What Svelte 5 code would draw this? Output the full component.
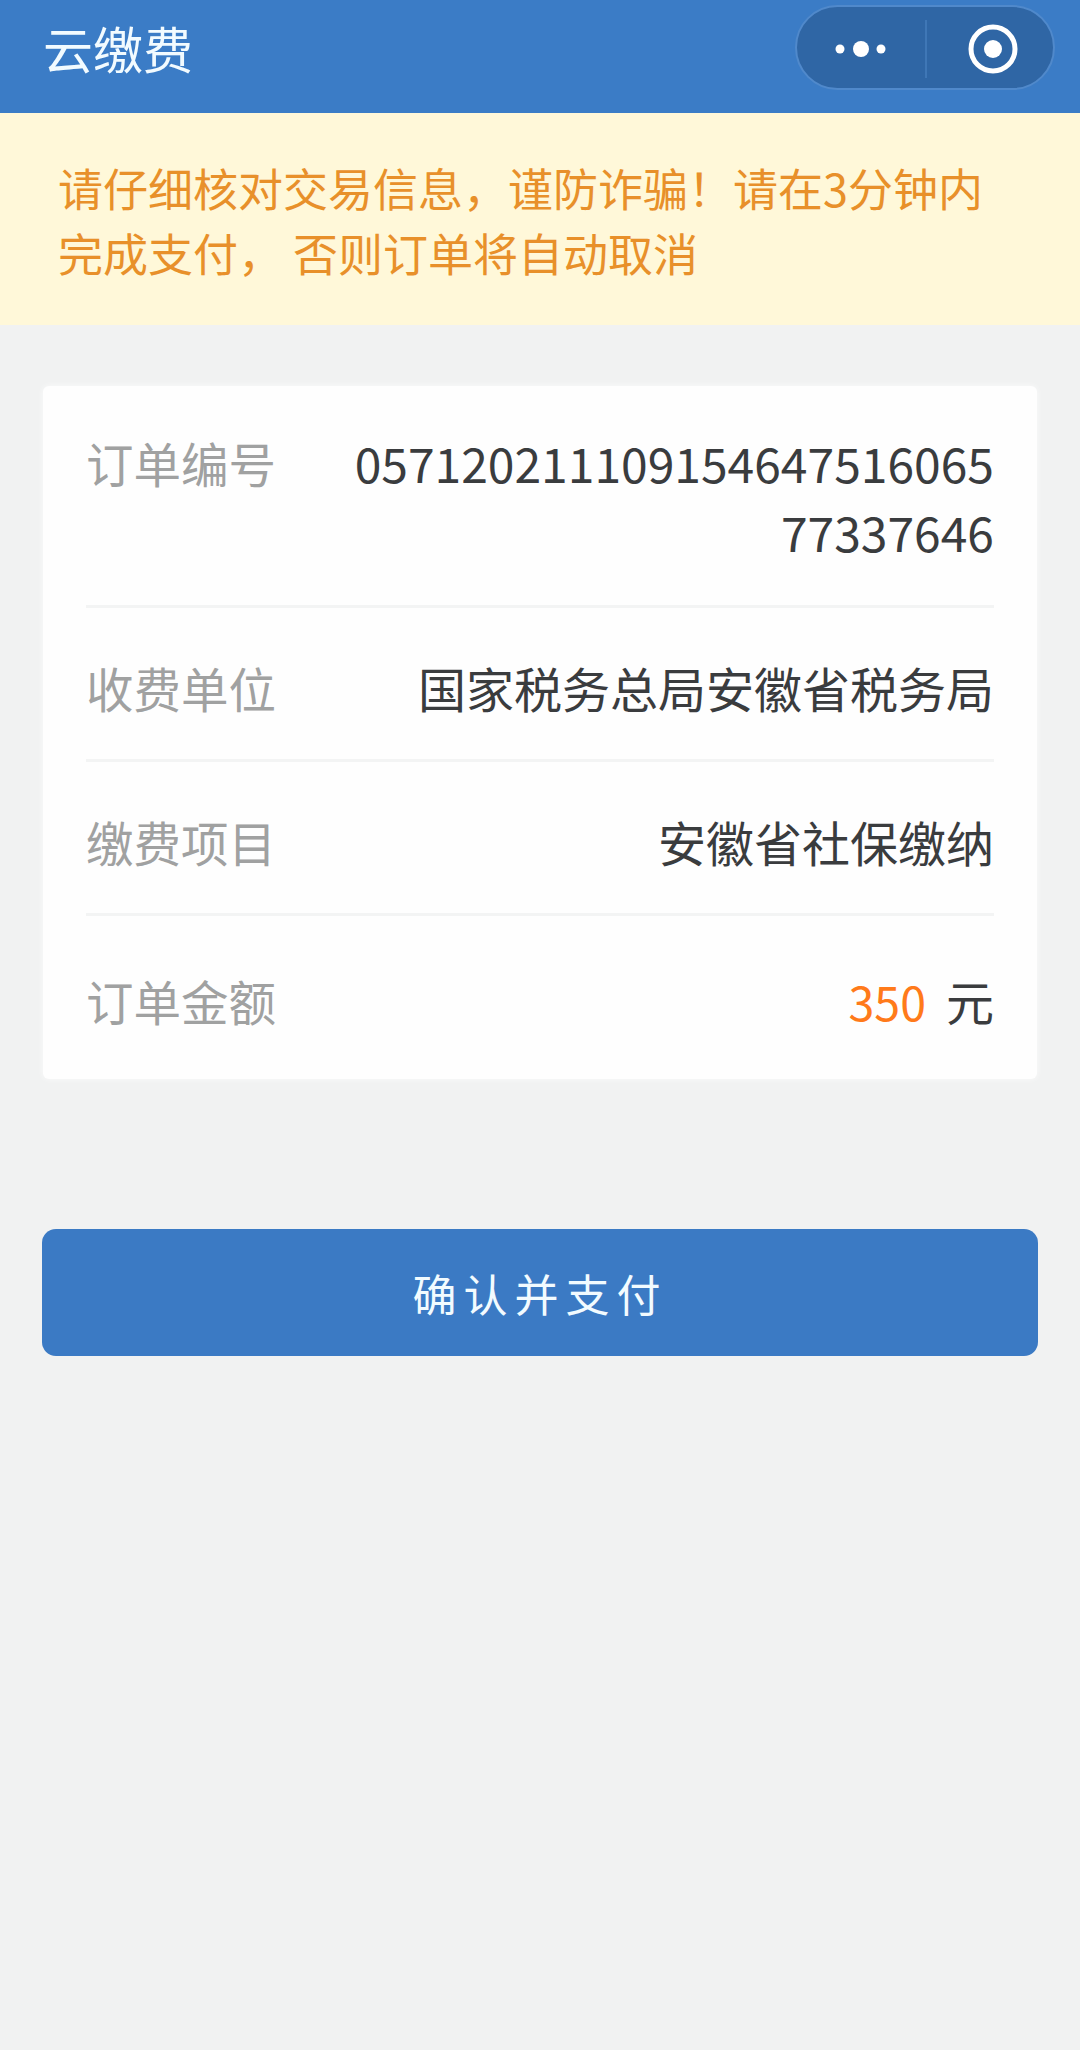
<script lang="ts">
  type Row = { label: string; value: string };

  const rows: Row[] = [
    { label: '订单编号', value: '05712021110915464751606577337646' },
    { label: '收费单位', value: '国家税务总局安徽省税务局' },
    { label: '缴费项目', value: '安徽省社保缴纳' }
  ];
</script>

<div class="page">
  <header class="nav">
    <span class="nav-title">云缴费</span>
    <div class="capsule">
      <div class="capsule-side capsule-left">
        <svg width="60" height="24" viewBox="0 0 60 24">
          <circle cx="9" cy="12" r="4.5" fill="#fff" />
          <circle cx="30" cy="12" r="8" fill="#fff" />
          <circle cx="50" cy="12" r="4.5" fill="#fff" />
        </svg>
      </div>
      <div class="capsule-line"></div>
      <div class="capsule-side capsule-right">
        <svg width="52" height="52" viewBox="0 0 52 52">
          <circle cx="26" cy="26" r="22" fill="none" stroke="#fff" stroke-width="5" />
          <circle cx="26" cy="26" r="9" fill="#fff" />
        </svg>
      </div>
    </div>
  </header>

  <div class="notice">请仔细核对交易信息，谨防诈骗！请在3分钟内完成支付， 否则订单将自动取消</div>

  <section class="card">
    {#each rows as row}
      <div class="row">
        <span class="label">{row.label}</span>
        <span class="value">{row.value}</span>
      </div>
    {/each}
    <div class="row row-last">
      <span class="label">订单金额</span>
      <span class="value"><span class="amount">350</span>元</span>
    </div>
  </section>

  <button class="pay-btn">确认并支付</button>
</div>

<style>
  :global(body) {
    background: #f1f2f2;
  }

  .page {
    min-height: 2050px;
    background: #f1f2f2;
    font-family: "Noto Sans CJK SC", "Noto Sans", sans-serif;
    overflow: hidden;
  }

  .nav {
    height: 113px;
    box-sizing: border-box;
    padding: 5px 25px 23px 43px;
    background: #3b7cc6;
    display: flex;
    align-items: flex-start;
    justify-content: space-between;
  }

  .nav-title {
    font-size: 50px;
    line-height: 84px;
    color: #f2fbff;
  }

  .capsule {
    width: 260px;
    height: 85px;
    box-sizing: border-box;
    padding-top: 3px;
    border: 2px solid #5089cb;
    border-radius: 43px;
    background: #2f66a5;
    display: flex;
    align-items: center;
  }

  .capsule-side {
    display: flex;
    align-items: center;
    justify-content: center;
  }

  .capsule-left {
    flex: 0 0 128px;
  }

  .capsule-right {
    flex: 1;
    padding-left: 6px;
  }

  .capsule-line {
    width: 2px;
    height: 58px;
    background: #3f77b6;
  }

  .notice {
    height: 212px;
    box-sizing: border-box;
    padding: 42px 70px 0 58px;
    background: #fff8d9;
    color: #e8902a;
    font-size: 45px;
    line-height: 65px;
  }

  .card {
    margin: 61px 43px 0;
    padding: 0 43px;
    background: #fefefe;
    border-radius: 6px;
    box-shadow: 0 0 6px rgba(255, 255, 255, 0.7);
  }

  .row {
    display: flex;
    justify-content: space-between;
    gap: 66px;
    padding: 45px 0 37px;
    border-bottom: 3px solid #f3f4f4;
    font-size: 47.5px;
    line-height: 69px;
  }

  .row:first-child {
    padding: 42px 0 39px;
  }

  .row-last {
    padding: 50px 0 44px;
    border-bottom: none;
  }

  .label {
    flex-shrink: 0;
    color: #a0a1a1;
  }

  .value {
    color: #3a3c3e;
    font-size: 48px;
    text-align: right;
    word-break: break-all;
  }

  .amount {
    color: #ff7a1a;
    font-size: 46.5px;
    margin-right: 20px;
  }

  .pay-btn {
    display: block;
    width: 996px;
    height: 127px;
    margin: 150px 42px 0;
    border: none;
    border-radius: 14px;
    background: #3b7ac4;
    color: #f2fbff;
    font-family: inherit;
    font-size: 44px;
    letter-spacing: 7px;
  }
</style>
